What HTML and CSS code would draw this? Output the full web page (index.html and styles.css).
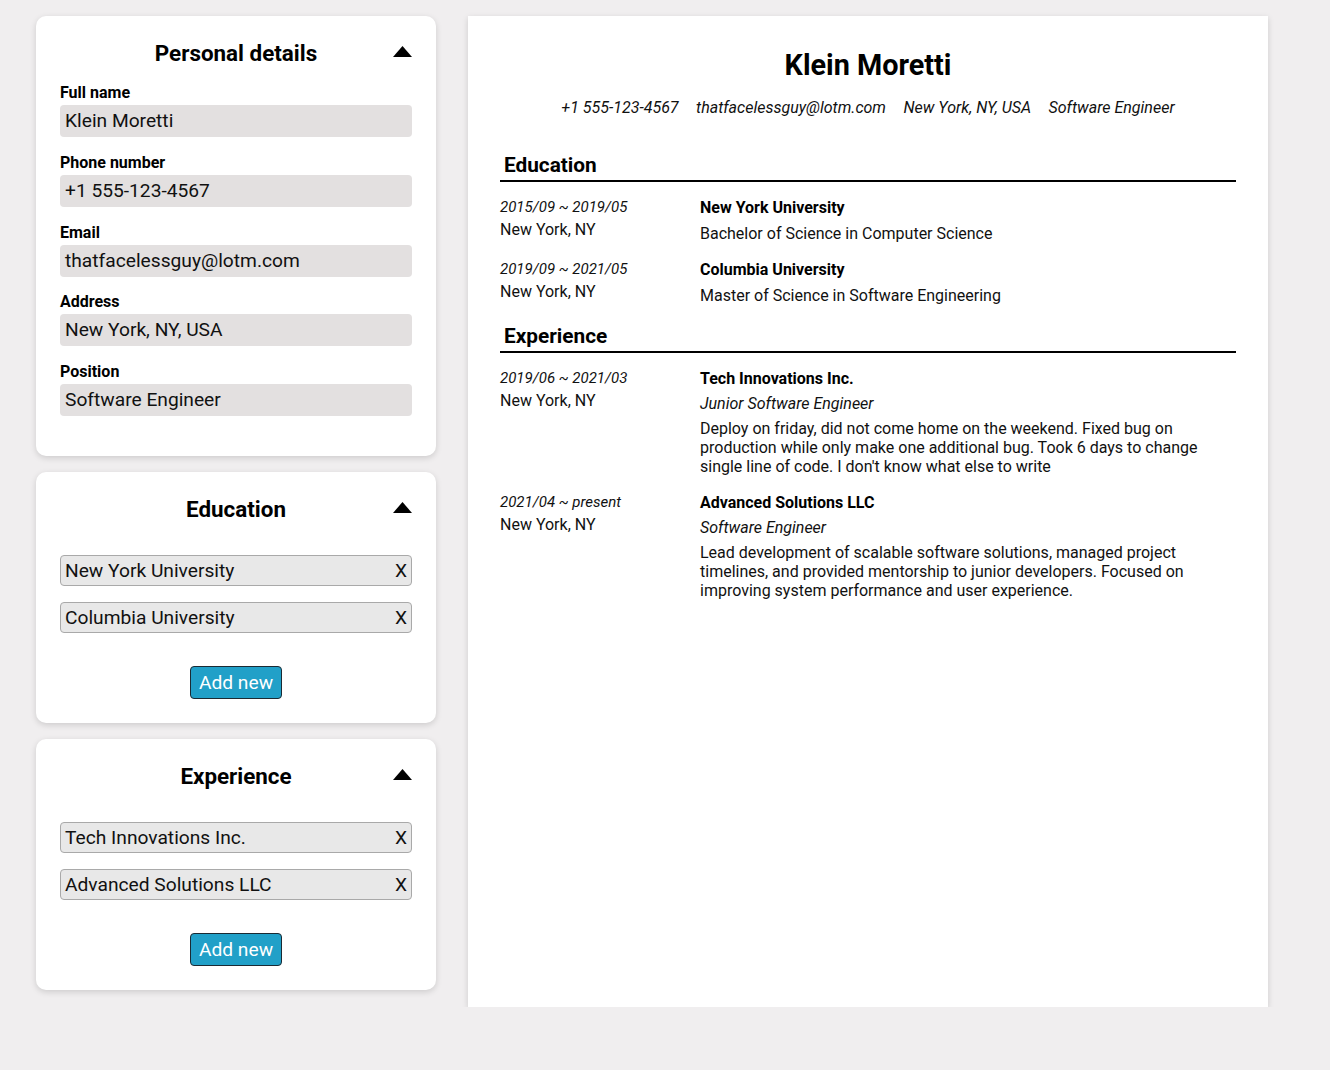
FILE: index.html
```html
<!DOCTYPE html>
<html lang="en">
<head>
<meta charset="utf-8">
<title>CV Builder</title>
<link rel="stylesheet" href="styles.css">
</head>
<body>
<div class="app">
  <aside class="editor">
    <section class="panel">
      <div class="panel-head">
        <h2 class="panel-title">Personal details</h2>
        <svg class="toggle" width="19" height="11" viewBox="0 0 19 11"><polygon points="9.5,0 19,11 0,11" fill="#000"/></svg>
      </div>
      <div class="fields">
        <label class="field"><span class="field-label">Full name</span><span class="field-input">Klein Moretti</span></label>
        <label class="field"><span class="field-label">Phone number</span><span class="field-input">+1 555-123-4567</span></label>
        <label class="field"><span class="field-label">Email</span><span class="field-input">thatfacelessguy@lotm.com</span></label>
        <label class="field"><span class="field-label">Address</span><span class="field-input">New York, NY, USA</span></label>
        <label class="field"><span class="field-label">Position</span><span class="field-input">Software Engineer</span></label>
      </div>
    </section>
    <section class="panel">
      <div class="panel-head">
        <h2 class="panel-title">Education</h2>
        <svg class="toggle" width="19" height="11" viewBox="0 0 19 11"><polygon points="9.5,0 19,11 0,11" fill="#000"/></svg>
      </div>
      <div class="items">
        <div class="item"><span>New York University</span><span class="remove">X</span></div>
        <div class="item"><span>Columbia University</span><span class="remove">X</span></div>
      </div>
      <div class="actions"><button class="add">Add new</button></div>
    </section>
    <section class="panel">
      <div class="panel-head">
        <h2 class="panel-title">Experience</h2>
        <svg class="toggle" width="19" height="11" viewBox="0 0 19 11"><polygon points="9.5,0 19,11 0,11" fill="#000"/></svg>
      </div>
      <div class="items">
        <div class="item"><span>Tech Innovations Inc.</span><span class="remove">X</span></div>
        <div class="item"><span>Advanced Solutions LLC</span><span class="remove">X</span></div>
      </div>
      <div class="actions"><button class="add">Add new</button></div>
    </section>
  </aside>

  <main class="resume">
    <header class="cv-head">
      <h1 class="cv-name">Klein Moretti</h1>
      <div class="cv-contact">
        <span>+1 555-123-4567</span>
        <span>thatfacelessguy@lotm.com</span>
        <span>New York, NY, USA</span>
        <span>Software Engineer</span>
      </div>
    </header>

    <section class="cv-section">
      <h3 class="cv-section-title">Education</h3>
      <div class="entry">
        <div class="entry-meta"><div class="entry-date">2015/09 ~ 2019/05</div><div class="entry-loc">New York, NY</div></div>
        <div class="entry-body"><div class="entry-title">New York University</div><div class="entry-sub">Bachelor of Science in Computer Science</div></div>
      </div>
      <div class="entry">
        <div class="entry-meta"><div class="entry-date">2019/09 ~ 2021/05</div><div class="entry-loc">New York, NY</div></div>
        <div class="entry-body"><div class="entry-title">Columbia University</div><div class="entry-sub">Master of Science in Software Engineering</div></div>
      </div>
    </section>

    <section class="cv-section">
      <h3 class="cv-section-title">Experience</h3>
      <div class="entry">
        <div class="entry-meta"><div class="entry-date">2019/06 ~ 2021/03</div><div class="entry-loc">New York, NY</div></div>
        <div class="entry-body">
          <div class="entry-title">Tech Innovations Inc.</div>
          <div class="entry-role">Junior Software Engineer</div>
          <p class="entry-desc">Deploy on friday, did not come home on the weekend. Fixed bug on production while only make one additional bug. Took 6 days to change single line of code. I don't know what else to write</p>
        </div>
      </div>
      <div class="entry">
        <div class="entry-meta"><div class="entry-date">2021/04 ~ present</div><div class="entry-loc">New York, NY</div></div>
        <div class="entry-body">
          <div class="entry-title">Advanced Solutions LLC</div>
          <div class="entry-role">Software Engineer</div>
          <p class="entry-desc">Lead development of scalable software solutions, managed project timelines, and provided mentorship to junior developers. Focused on improving system performance and user experience.</p>
        </div>
      </div>
    </section>
  </main>
</div>
</body>
</html>
```

FILE: styles.css
```css
* { box-sizing: border-box; }

html, body {
  margin: 0;
  padding: 0;
  background: #f0eeef;
  font-family: Roboto, "Liberation Sans", Arial, sans-serif;
  color: #000;
}

.app {
  display: flex;
  align-items: flex-start;
  gap: 32px;
  padding: 16px 0 0 36px;
}

.editor {
  width: 400px;
  display: flex;
  flex-direction: column;
  gap: 16px;
}

.panel {
  background: #fff;
  border-radius: 10px;
  box-shadow: 0 2px 6px rgba(0, 0, 0, 0.15);
  padding: 24px 24px 24px;
}

.panel-head {
  display: grid;
  grid-template-columns: 1fr auto 1fr;
  align-items: center;
}

.panel-title {
  grid-column: 2;
  margin: 0;
  font-size: 22.4px;
  font-weight: 700;
  line-height: 26px;
  text-align: center;
  white-space: nowrap;
}

.toggle {
  grid-column: 3;
  justify-self: end;
  display: block;
  margin-top: -3px;
}

.fields {
  display: flex;
  flex-direction: column;
  gap: 15.75px;
  margin-top: 17px;
  padding-bottom: 16px;
}

.field {
  display: flex;
  flex-direction: column;
  gap: 3px;
}

.field-label {
  font-size: 16px;
  font-weight: 700;
  line-height: 19px;
}

.field-input {
  display: block;
  height: 32px;
  line-height: 32px;
  padding: 0 5px;
  background: #e3e0e0;
  border-radius: 4px;
  font-size: 19.2px;
  color: #111;
}

.items {
  display: flex;
  flex-direction: column;
  gap: 16px;
  margin-top: 33px;
}

.item {
  display: flex;
  justify-content: space-between;
  align-items: center;
  height: 31px;
  padding: 0 4px;
  background: #e8e8e8;
  border: 1px solid #a9a9a9;
  border-radius: 4px;
  font-size: 19.2px;
  color: #111;
}

.remove {
  font-size: 19.2px;
}

.actions {
  display: flex;
  justify-content: center;
  margin-top: 33px;
}

.add {
  height: 33px;
  padding: 0 8px;
  background: #21a0c8;
  color: #fff;
  border: 1px solid #1b2a33;
  border-radius: 4px;
  font-family: Roboto, "Liberation Sans", Arial, sans-serif;
  font-size: 19.2px;
  line-height: 30px;
}

.resume {
  width: 800px;
  min-height: 991px;
  background: #fff;
  box-shadow: 0 2px 6px rgba(0, 0, 0, 0.15);
  padding: 32px 32px;
}

.cv-head {
  text-align: center;
}

.cv-name {
  margin: 0;
  font-size: 28.8px;
  font-weight: 700;
  line-height: 34px;
}

.cv-contact {
  display: flex;
  justify-content: center;
  gap: 17.5px;
  margin-top: 16px;
  font-size: 16px;
  font-style: italic;
  line-height: 19px;
  color: #111;
}

.cv-section {
  margin-top: 36px;
}

.cv-section + .cv-section {
  margin-top: 19px;
}

.cv-section-title {
  margin: 0;
  padding: 0 4px 3px;
  font-size: 20.8px;
  font-weight: 700;
  line-height: 24px;
  border-bottom: 2px solid #000;
}

.entry {
  display: grid;
  grid-template-columns: 200px 1fr;
  margin-top: 16px;
}

.entry + .entry {
  margin-top: 17px;
}

.entry-date {
  font-size: 15px;
  font-style: italic;
  line-height: 19px;
  color: #111;
}

.entry-loc {
  margin-top: 3px;
  font-size: 16px;
  line-height: 19px;
  color: #111;
}

.entry-title {
  font-size: 16px;
  font-weight: 700;
  line-height: 19px;
}

.entry-sub {
  margin-top: 7px;
  font-size: 16px;
  line-height: 19px;
  color: #111;
}

.entry-role {
  margin-top: 6px;
  font-size: 16px;
  font-style: italic;
  line-height: 19px;
  color: #111;
}

.entry-desc {
  margin: 6px 0 0;
  font-size: 16px;
  line-height: 19px;
  color: #111;
}
```
